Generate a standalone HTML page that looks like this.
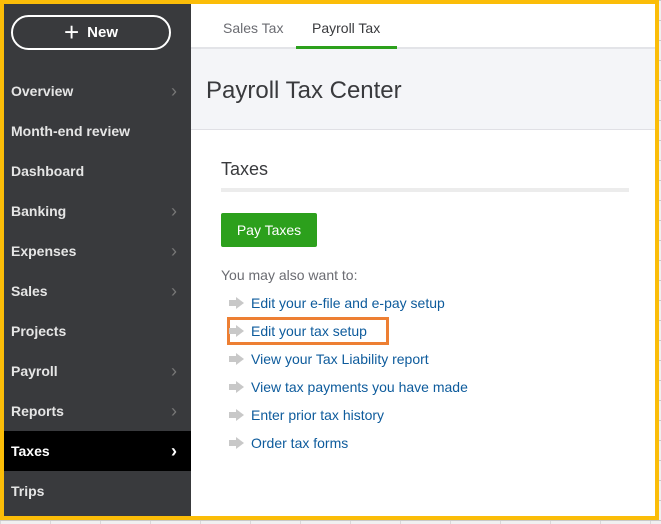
<!DOCTYPE html><html><head><style>
*{margin:0;padding:0;box-sizing:border-box}
body{width:661px;height:524px;background:#f0f0f0;font-family:"Liberation Sans",sans-serif;position:relative;overflow:hidden}
.grid{position:absolute;inset:0;background-image:linear-gradient(#c8c8c8 1px,transparent 1px),linear-gradient(90deg,#d8d8d8 1px,transparent 1px);background-size:50px 20px}
.frame{position:absolute;left:0;top:0;width:659px;height:520px;border:4px solid #fbbd08;background:#fff;overflow:hidden}
.side{position:absolute;left:0;top:0;width:187px;height:100%;background:#393a3d}
.new{position:absolute;left:7px;top:11px;width:160px;height:35px;border:2px solid #fff;border-radius:18px;color:#fff;font-weight:bold;font-size:15px;line-height:31px;text-align:center}
.new span{font-weight:normal;font-size:26px;vertical-align:-4px;margin-right:8px}
.item{position:absolute;left:0;width:187px;height:40px;line-height:40px;padding-left:7px;color:#e5e5e5;font-size:14px;font-weight:bold}
.item i{position:absolute;right:14px;font-style:normal;color:#777;font-weight:normal;font-size:18px}
.act{background:#000;color:#fff}.act i{color:#fff;font-weight:bold}
.tabs{position:absolute;left:187px;top:0;right:0;height:45px;border-bottom:2px solid #e3e4e8}
.tab{position:absolute;top:16px;font-size:14px;color:#6b6c72}
.hdr{position:absolute;left:187px;right:0;top:45px;height:81px;background:#f4f5f8;border-bottom:1px solid #e0e0e5}
.hdr h1{font-weight:normal;font-size:24px;color:#393a3d;position:absolute;left:15px;top:28px}
a{color:#0d5b9c;text-decoration:none}
.lk{position:absolute;left:232px;font-size:14px}
.lk b{display:inline-block;width:0;height:0;border:6px solid transparent;border-left:8px solid #c8c8c8;vertical-align:-1px;margin-right:1px;position:relative}
.lk b:before{content:"";position:absolute;left:-15px;top:-3px;width:7px;height:6px;background:#c8c8c8}
</style></head><body><div class="grid"></div>
<div class="frame">
<div class="side">
<div class="new"><span>+</span>New</div>
<div class="item" style="top:67px">Overview<i>›</i></div>
<div class="item" style="top:107px">Month-end review</div>
<div class="item" style="top:147px">Dashboard</div>
<div class="item" style="top:187px">Banking<i>›</i></div>
<div class="item" style="top:227px">Expenses<i>›</i></div>
<div class="item" style="top:267px">Sales<i>›</i></div>
<div class="item" style="top:307px">Projects</div>
<div class="item" style="top:347px">Payroll<i>›</i></div>
<div class="item" style="top:387px">Reports<i>›</i></div>
<div class="item act" style="top:427px">Taxes<i>›</i></div>
<div class="item" style="top:467px">Trips</div>
</div>
<div class="tabs"><span class="tab" style="left:32px">Sales Tax</span><span class="tab" style="left:121px;color:#393a3d">Payroll Tax</span>
<div style="position:absolute;left:105px;width:101px;top:42px;height:3px;background:#2ca01c"></div></div>
<div class="hdr"><h1>Payroll Tax Center</h1></div>
<div style="position:absolute;left:217px;top:155px;font-size:18px;color:#393a3d">Taxes</div>
<div style="position:absolute;left:217px;top:184px;width:408px;height:4px;background:#ececec"></div>
<div style="position:absolute;left:217px;top:209px;width:96px;height:34px;background:#2ca01c;border-radius:2px;color:#fff;font-size:14px;text-align:center;line-height:34px">Pay Taxes</div>
<div style="position:absolute;left:217px;top:263px;font-size:14px;color:#6b6c72">You may also want to:</div>
<div class="lk" style="top:291px"><b></b><a>Edit your e-file and e-pay setup</a></div>
<div style="position:absolute;left:223px;top:313px;width:162px;height:28px;border:3px solid #ed7f33"></div>
<div class="lk" style="top:319px"><b></b><a>Edit your tax setup</a></div>
<div class="lk" style="top:347px"><b></b><a>View your Tax Liability report</a></div>
<div class="lk" style="top:375px"><b></b><a>View tax payments you have made</a></div>
<div class="lk" style="top:403px"><b></b><a>Enter prior tax history</a></div>
<div class="lk" style="top:431px"><b></b><a>Order tax forms</a></div>
</div></body></html>
